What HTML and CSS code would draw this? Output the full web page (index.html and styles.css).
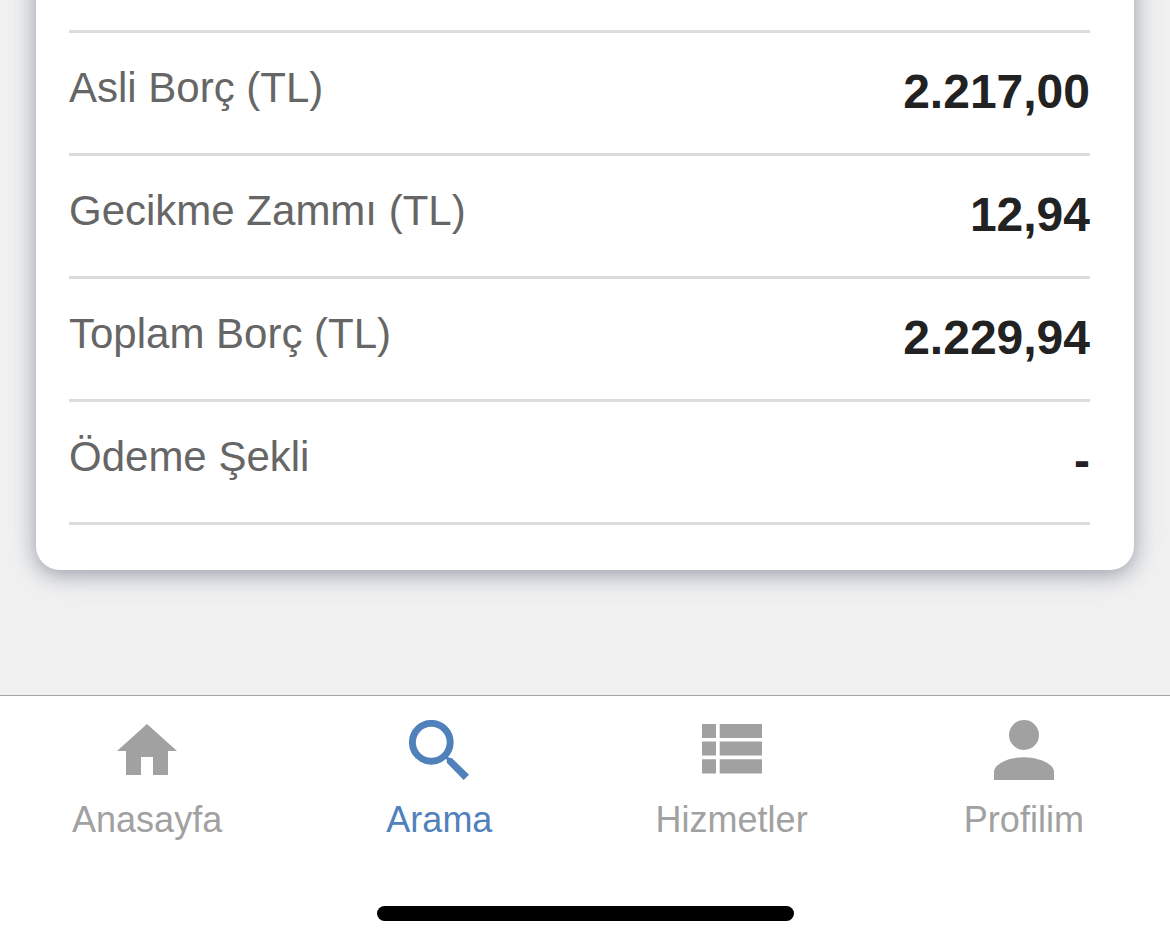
FILE: index.html
```html
<!DOCTYPE html>
<html lang="tr">
<head>
<meta charset="utf-8">
<meta name="viewport" content="width=device-width, initial-scale=1">
<title>Borç Detayı</title>
<link rel="stylesheet" href="styles.css">
</head>
<body>
<main class="content">
  <section class="card">
    <dl class="details">
      <div class="row"><dt class="label">Asli Borç (TL)</dt><dd class="value">2.217,00</dd></div>
      <div class="row"><dt class="label">Gecikme Zammı (TL)</dt><dd class="value">12,94</dd></div>
      <div class="row"><dt class="label">Toplam Borç (TL)</dt><dd class="value">2.229,94</dd></div>
      <div class="row"><dt class="label">Ödeme Şekli</dt><dd class="value">-</dd></div>
    </dl>
  </section>
</main>
<footer class="bottom-bar">
  <nav class="tabs">
    <a class="tab" href="#anasayfa">
      <svg class="icon" viewBox="0 0 60 60" aria-hidden="true"><path d="M30 4 60 31H51V55H36V37H24V55H9V31H0Z"/></svg>
      <span>Anasayfa</span>
    </a>
    <a class="tab active" href="#arama" aria-current="page">
      <svg class="icon" viewBox="0 0 60 60" aria-hidden="true"><circle cx="22.3" cy="22.3" r="18.9" fill="none" stroke="currentColor" stroke-width="6.9"/><path d="M36 38.2 38.2 36 39.7 37.5 43 38.2 60 54.7 54.7 60 37.8 42.8 37.8 39.8Z"/></svg>
      <span>Arama</span>
    </a>
    <a class="tab" href="#hizmetler">
      <svg class="icon" viewBox="0 0 60 60" aria-hidden="true"><path d="M0 4H14V18H0ZM17.7 4H60V18H17.7ZM0 21.5H14V35.6H0ZM17.7 21.5H60V35.6H17.7ZM0 39.3H14V53.4H0ZM17.7 39.3H60V53.4H17.7Z"/></svg>
      <span>Hizmetler</span>
    </a>
    <a class="tab" href="#profilim">
      <svg class="icon" viewBox="0 0 60 60" aria-hidden="true"><circle cx="30" cy="15" r="15"/><path d="M0 60V52C0 44 15 37.2 30 37.2S60 44 60 52V60Z"/></svg>
      <span>Profilim</span>
    </a>
  </nav>
  <div class="home-indicator"></div>
</footer>
</body>
</html>
```
FILE: styles.css
```css
* {
  box-sizing: border-box;
}

body {
  margin: 0;
  min-height: 100vh;
  display: flex;
  flex-direction: column;
  background: #f1f1f1;
  font-family: "Liberation Sans", Arial, sans-serif;
}

.content {
  flex: 1;
  padding: 0 36px 125px;
  overflow: hidden;
}

/* The card continues above the visible scroll area. */
.card {
  margin-top: -60px;
  padding: 90px 44px 45px 33px;
  background: #fff;
  border-radius: 24px;
  box-shadow: 0 4px 36px rgba(60, 90, 130, 0.14), 0 4px 20px rgba(40, 42, 70, 0.36);
}

.details {
  margin: 0;
  border-bottom: 3px solid #dcdcdc;
}

.row {
  display: flex;
  justify-content: space-between;
  align-items: flex-start;
  padding: 31px 0 33px;
  border-top: 3px solid #dcdcdc;
}

.label {
  font-size: 42px;
  line-height: 48px;
  color: #666;
}

.value {
  margin: 0;
  font-size: 48px;
  font-weight: 700;
  line-height: 56px;
  color: #222;
}

.bottom-bar {
  display: flex;
  flex-direction: column;
  align-items: center;
  gap: 66px;
  padding: 24px 0;
  background: #fff;
  border-top: 1px solid #a7a7aa;
}

.tabs {
  display: flex;
  width: 100%;
  padding-left: 1px;
}

.tab {
  flex: 1;
  display: flex;
  flex-direction: column;
  align-items: center;
  gap: 20px;
  font-size: 36px;
  line-height: 40px;
  color: #a1a1a1;
  text-decoration: none;
}

.tab.active {
  color: #5081bb;
}

.icon {
  width: 60px;
  height: 60px;
  fill: currentColor;
}

.home-indicator {
  width: 417px;
  height: 15px;
  border-radius: 8px;
  background: #000;
}
```
